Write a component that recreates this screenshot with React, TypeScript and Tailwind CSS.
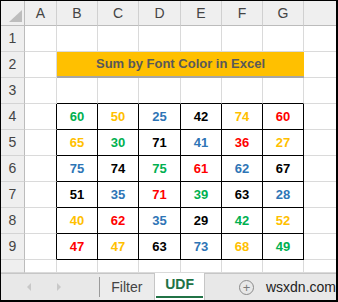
import React from "react";

const G = "#00b050";
const Y = "#ffc000";
const B = "#2e75b6";
const R = "#ff0000";
const K = "#000000";

const data: [number, string][][] = [
  [[60, G], [50, Y], [25, B], [42, K], [74, Y], [60, R]],
  [[65, Y], [30, G], [71, K], [41, B], [36, R], [27, Y]],
  [[75, B], [74, K], [75, G], [61, R], [62, B], [67, K]],
  [[51, K], [35, B], [71, R], [39, G], [63, K], [28, B]],
  [[40, Y], [62, R], [35, B], [29, K], [42, G], [52, Y]],
  [[47, R], [47, Y], [63, K], [73, B], [68, Y], [49, G]],
];

const font = { fontFamily: "'Liberation Sans', Arial, sans-serif" };
const cols = ["A", "B", "C", "D", "E", "F", "G"];

function RowHead({ n, h = "h-[26px]" }: { n?: number; h?: string }) {
  return (
    <div className={`${h} bg-[#efefef] border-r border-b border-r-[#bcbcbc] border-b-[#d4d4d4] flex items-center justify-center text-[14px] text-[#444]`}>
      {n}
    </div>
  );
}

export default function App() {
  const rows: React.ReactNode[] = [];
  rows.push(
    <div key="corner" className="h-[25px] bg-[#efefef] border-r border-b border-[#bcbcbc] relative">
      <div className="absolute right-[2px] bottom-[3px] w-0 h-0 border-l-[13px] border-l-transparent border-b-[12px] border-b-[#bdbdbd]" />
    </div>
  );
  cols.forEach((c) =>
    rows.push(
      <div key={"h" + c} className="h-[25px] bg-[#efefef] border-r border-b border-r-[#d0d0d0] border-b-[#bcbcbc] flex items-center justify-center text-[14px] text-[#444]">
        {c}
      </div>
    )
  );
  rows.push(<div key="hx" className="h-[25px] bg-[#efefef] border-b border-[#bcbcbc]" />);

  for (let r = 1; r <= 10; r++) {
    const h = r === 10 ? "h-[13px]" : "h-[26px]";
    rows.push(<RowHead key={"r" + r} n={r === 10 ? undefined : r} h={h} />);
    const aBlack = r >= 4 && r <= 9;
    rows.push(
      <div
        key={"a" + r}
        className={`${h} border-b border-b-[#dadada] border-r ${aBlack ? "border-r-black" : "border-r-[#dadada]"}`}
      />
    );
    if (r === 2) {
      rows.push(
        <div
          key="banner"
          className="col-span-6 h-[26px] bg-[#ffc000] border-b-2 border-b-[#a6a6a6] flex items-center justify-center font-bold text-[13px] text-[#595959]"
        >
          Sum by Font Color in Excel
        </div>
      );
    } else {
      for (let c = 0; c < 6; c++) {
        const inTable = r >= 4 && r <= 9;
        const topBorder = r === 3;
        const cell = inTable ? data[r - 4][c] : null;
        rows.push(
          <div
            key={"c" + r + c}
            className={`${h} border-r border-b flex items-center justify-center font-bold text-[13px] ${
              inTable ? "border-black" : topBorder ? "border-r-[#dadada] border-b-black" : "border-[#dadada]"
            }`}
            style={cell ? { color: cell[1] } : undefined}
          >
            {cell ? cell[0] : null}
          </div>
        );
      }
    }
    rows.push(<div key={"x" + r} className={`${h} border-b border-[#dadada]`} />);
  }

  return (
    <div
      className="w-[338px] h-[302px] overflow-hidden bg-white border-t border-l border-r-2 border-b-2 border-black flex flex-col"
      style={font}
    >
      <div className="grid grid-cols-[24px_32px_41px_41px_42px_41px_41px_41px_1fr]">{rows}</div>
      <div className="flex-1 flex bg-[#e8e8e8] border-t border-[#c6c6c6] text-[14px]">
        <div className="w-[98px] flex items-center">
          <span className="ml-[26px] w-0 h-0 border-y-[4px] border-y-transparent border-r-[4px] border-r-[#c8c8c8]" />
          <span className="ml-[26px] w-0 h-0 border-y-[4px] border-y-transparent border-l-[4px] border-l-[#c8c8c8]" />
        </div>
        <div className="w-px my-[3px] bg-[#9a9a9a]" />
        <div className="w-[56px] flex items-center justify-center text-[#444] bg-[#ececec] border-r border-[#c6c6c6]">
          Filter
        </div>
        <div className="w-[49px] -mt-px bg-white flex flex-col">
          <div className="flex-1 flex items-center justify-center font-bold text-[#217346]">UDF</div>
          <div className="h-[2px] mx-[1px] mb-[2px] bg-[#217346]" />
        </div>
        <div className="flex-1 flex items-center border-l border-[#c6c6c6]">
          <span className="ml-[34px] w-[15px] h-[15px] rounded-full border border-[#8a8a8a] flex items-center justify-center text-[#7a7a7a] text-[13px] leading-none">
            +
          </span>
          <span className="ml-[12px] text-[#222] text-[14px]">wsxdn.com</span>
        </div>
      </div>
    </div>
  );
}
